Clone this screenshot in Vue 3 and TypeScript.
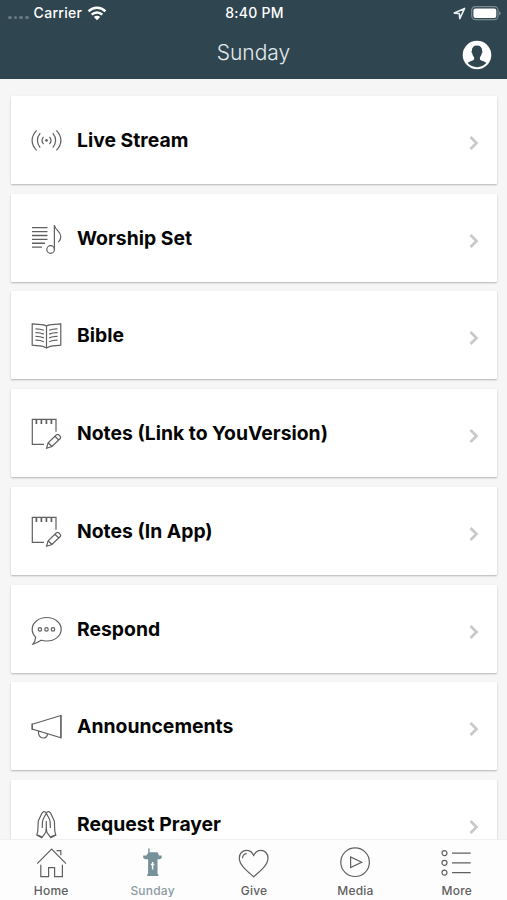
<script setup lang="ts">
type IconName = 'live' | 'worship' | 'bible' | 'notes' | 'respond' | 'announce' | 'prayer'
type TabName = 'home' | 'sunday' | 'give' | 'media' | 'more'

const items: { label: string; icon: IconName }[] = [
  { label: 'Live Stream', icon: 'live' },
  { label: 'Worship Set', icon: 'worship' },
  { label: 'Bible', icon: 'bible' },
  { label: 'Notes (Link to YouVersion)', icon: 'notes' },
  { label: 'Notes (In App)', icon: 'notes' },
  { label: 'Respond', icon: 'respond' },
  { label: 'Announcements', icon: 'announce' },
  { label: 'Request Prayer', icon: 'prayer' },
]

const tabs: { label: string; icon: TabName }[] = [
  { label: 'Home', icon: 'home' },
  { label: 'Sunday', icon: 'sunday' },
  { label: 'Give', icon: 'give' },
  { label: 'Media', icon: 'media' },
  { label: 'More', icon: 'more' },
]
const active: TabName = 'sunday'
</script>

<template>
  <div class="screen">
    <header class="header">
      <div class="status">
        <div class="carrier">
          <span class="dots"><i v-for="n in 4" :key="n" /></span>
          <span class="carrier-name">Carrier</span>
          <svg class="wifi" viewBox="0 0 20 15">
            <path d="M1.6 5.3a12 12 0 0 1 16.8 0M4.7 8.6a7.6 7.6 0 0 1 10.6 0" fill="none" stroke="#fff" stroke-width="2.5" />
            <path d="M10 14.3 6.8 11a4.6 4.6 0 0 1 6.4 0z" fill="#fff" />
          </svg>
        </div>
        <span class="time">8:40 PM</span>
        <div class="power">
          <svg class="location" viewBox="0 0 13 13">
            <path d="M11.6 1.4 1.3 6.1l5 .4.5 5.2z" fill="none" stroke="#e9eef0" stroke-width="1.6" stroke-linejoin="round" />
          </svg>
          <svg class="battery" viewBox="0 0 30 15">
            <rect x=".7" y=".7" width="26.3" height="13" rx="3.6" fill="none" stroke="#7b8b92" stroke-width="1.2" />
            <rect x="2.4" y="2.4" width="22.9" height="9.6" rx="2" fill="#fff" />
            <path d="M28.2 5v4.5q1.3-.8 1.3-2.25T28.2 5" fill="#8b999f" />
          </svg>
        </div>
      </div>
      <div class="titlebar">
        <h1>Sunday</h1>
        <svg class="profile" viewBox="0 0 30 30">
          <circle cx="15" cy="15" r="14.3" fill="#fff" />
          <path d="M15 5.5c-3.5 0-5.2 2.2-5.1 5.3-.6.5-.4 2.2.4 2.7.3 1.7 1 2.9 1.8 3.7v2.1c-.4 1.5-4.5 1.8-6.4 3.8a12.6 12.6 0 0 0 18.6 0c-1.9-2-6-2.3-6.4-3.8v-2.1c.8-.8 1.5-2 1.8-3.7.8-.5 1-2.2.4-2.7.1-3.1-1.6-5.3-5.1-5.3z" fill="#2f454f" />
        </svg>
      </div>
    </header>

    <main class="list">
      <article v-for="item in items" :key="item.label" class="card">
        <svg class="icon" viewBox="0 0 32 32">
          <template v-if="item.icon === 'live'">
            <circle cx="15.5" cy="16.4" r="1.3" class="solid" />
            <path d="M12.5 12.8q-3 3.6 0 7.2M18.5 12.8q3 3.6 0 7.2M9.2 9.2q-5.6 7.2 0 14.4M21.8 9.2q5.6 7.2 0 14.4M5.6 6.4q-9 10 0 20M25.4 6.4q9 10 0 20" />
          </template>
          <template v-else-if="item.icon === 'worship'">
            <path d="M1 5.6h15.5M1 9.6h15.5M1 13.5h15.5M1 17.4h15.5M1 21.2h13M1 25.1h10" stroke-width="1.4" />
            <path d="M23.4 27.4V3c.6 5.3 6.4 6.2 6.4 11.4 0 2.4-1 4.3-2.4 5.8" />
            <circle cx="19.6" cy="27.5" r="3.8" />
          </template>
          <template v-else-if="item.icon === 'bible'">
            <path d="M15.5 7C12 4.6 7.3 5.9 1.2 4.9v21.3c5.8.7 11-.1 14.3 2.9 3.3-3 8.5-2.2 14.3-2.9V4.9C23.7 5.9 19 4.6 15.5 7zM15.5 7v22" />
            <path d="M4.5 9.8q4.8-.1 8.3 1.5M4.5 13.6q4.8-.1 8.3 1.5M4.5 17.4q4.8-.1 8.3 1.5M4.5 21.2q4.8-.1 8.3 1.5M26.5 9.8q-4.8-.1-8.3 1.5M26.5 13.6q-4.8-.1-8.3 1.5M26.5 17.4q-4.8-.1-8.3 1.5M26.5 21.2q-4.8-.1-8.3 1.5" />
          </template>
          <template v-else-if="item.icon === 'notes'">
            <path d="M25 14.8V2.3H1.3v25.1H13" />
            <path d="M5.4 3v4M10.4 3v4M15.4 3v4M20.4 3v4" stroke-width="1.7" />
            <path d="M15.6 31.2l1.5-5.5 8.4-7.9q1.1-.9 2.2 0l1.5 1.5q.9 1.1 0 2.2l-8.2 8zM17.1 25.7l3.9 3.8M23.9 19.3l3.9 3.7" />
          </template>
          <template v-else-if="item.icon === 'respond'">
            <path d="M2 31.2q2.4-3 2.6-7.1C2.3 22 1.2 19.5 1.2 16.3 1.2 9.7 7.6 4.5 15.7 4.5s14.5 5.2 14.5 11.8S23.8 28 15.7 28q-3 0-5.5-.8-3.8 2.2-8.2 4z" />
            <circle cx="8.9" cy="16.4" r="1.7" /><circle cx="15.5" cy="16.4" r="1.7" /><circle cx="22" cy="16.4" r="1.7" />
          </template>
          <template v-else-if="item.icon === 'announce'">
            <path d="M1.2 14.2 29.9 5.5v22.3L1.2 19.1zM7.5 21c-.5 4.3 1.7 7 4.7 7 2.4 0 4-1.5 4.4-4.2" />
            <path d="M1.2 13.5v6.3M29.9 5v23.3" />
          </template>
          <template v-else>
            <path d="M15.3 5.2c-1.4-2.5-3.5-1.7-4.5.3L7.400 12.700c-1 3.500.7 8-1.600 14.600l5 2.500 3.300-4.600c1.400-1.500 1.200-4.200 1.200-11.400 0 7.200-.2 9.900 1.200 11.400l3.300 4.600 5-2.500c-2.300-6.600-.6-11.100-1.600-14.600L19.800 5.500c-1-2-3.100-2.800-4.500-.3M15.300 5.200 12 11.500c-1 2.500-.7 5.300-.7 8.500M15.300 5.200l3.300 6.300c1 2.500.7 5.300.7 8.500M5.600 26.500l5.800 2.600M25 26.500l-5.800 2.600M15.300 13v10.500" />
          </template>
        </svg>
        <span class="label">{{ item.label }}</span>
        <svg class="chevron" viewBox="0 0 12 18">
          <path d="m2.5 3 6 6-6 6" fill="none" stroke="#c9c9cb" stroke-width="2.7" />
        </svg>
      </article>
    </main>

    <nav class="tabs">
      <div v-for="tab in tabs" :key="tab.icon" class="tab" :class="{ active: tab.icon === active }">
        <svg class="icon" viewBox="0 0 32 32">
          <template v-if="tab.icon === 'home'">
            <path d="M2.2 16.6 16.6 2.2 31 16.6M5.8 17.7v11.900h7.800v-8.900h6v8.900h7.800V17.700M21.500 3.700h4.300v4.500" />
          </template>
          <template v-else-if="tab.icon === 'sunday'">
            <path class="fill" fill-rule="evenodd" d="M12.200 1.500h1.400v3.700h8l1.300 3.200h2.800v2.500l-1.700 1.300h-2.500v14.800h.8v1.900H11.300V27h.8V12.200H9.200L7.200 10.900V8.400h3.200l1.800-2.700zM15.900 15v1.800h-1v1.500h1v4.200h1.400v-4.200h1v-1.500h-1V15z" />
          </template>
          <template v-else-if="tab.icon === 'give'">
            <path d="M16.7 8.400C15 4.800 12.600 3.300 9.600 3.300 5.400 3.300 2.300 6.700 2.300 10.900c0 7.600 8.700 13.700 14.400 18.800C22.400 24.600 31 18.500 31 10.900c0-4.200-3.100-7.600-7.300-7.600-3 0-5.300 1.500-7 5.100zM5.500 11.200c0-2.700 1.800-4.600 4.200-4.600" />
          </template>
          <template v-else-if="tab.icon === 'media'">
            <circle cx="16.1" cy="15.2" r="14.3" />
            <path d="M11.6 9.9v10.7l11.1-5.3z" />
          </template>
          <template v-else>
            <circle cx="4.5" cy="6.1" r="2.5" /><circle cx="4.5" cy="15.8" r="2.5" /><circle cx="4.5" cy="25.6" r="2.5" />
            <path d="M12 6.1h18.700M12 15.800h18.700M12 25.600h18.700" />
          </template>
        </svg>
        <span>{{ tab.label }}</span>
      </div>
    </nav>
  </div>
</template>

<style>
body {
  background: #f6f6f6;
}
</style>

<style scoped>
.screen {
  display: flex;
  flex-direction: column;
  height: 900px;
  overflow: hidden;
  background: #f6f6f6;
  font-family: Inter, "Liberation Sans", sans-serif;
}
.header {
  flex: none;
  box-sizing: border-box;
  height: 79px;
  background: #2f454f;
  border-bottom: 1px solid #29434c;
  color: #fff;
}
.status {
  display: grid;
  grid-template-columns: 1fr auto 1fr;
  align-items: center;
  height: 26px;
  padding: 0 6px 0 8px;
  font-size: 14px;
  font-weight: 500;
  line-height: 18px;
}
.time {
  letter-spacing: 0.25px;
}
.carrier,
.power {
  display: flex;
  align-items: center;
}
.power {
  justify-content: flex-end;
  gap: 5px;
}
.dots {
  display: flex;
  gap: 2.2px;
  padding-top: 9px;
  margin-right: 5px;
}
.dots i {
  width: 3.5px;
  height: 3.5px;
  border-radius: 50%;
  background: #667981;
}
.carrier-name {
  width: 49px;
  letter-spacing: 0.3px;
}
.wifi {
  width: 20px;
  height: 15px;
  margin-left: 4.5px;
}
.location {
  width: 13px;
  height: 13px;
}
.battery {
  width: 30px;
  height: 15px;
}
.titlebar {
  display: grid;
  grid-template-columns: 1fr auto 1fr;
  align-items: center;
  height: 54px;
  padding: 0 15px;
}
h1 {
  grid-column: 2;
  margin: 0;
  color: #e3eaed;
  font-size: 21px;
  font-weight: 300;
  line-height: 26px;
}
.profile {
  justify-self: end;
  width: 30px;
  height: 30px;
  margin-top: 3px;
}
.list {
  flex: 1;
  min-height: 0;
  display: flex;
  flex-direction: column;
  gap: 9.72px;
  overflow: hidden;
  padding: 17px 10px 0 11px;
}
.card {
  flex: none;
  box-sizing: border-box;
  display: flex;
  align-items: center;
  height: 88px;
  padding: 0 17px 0 20px;
  border-radius: 1px;
  background: #fff;
  box-shadow: 0 1px 2px rgba(0, 0, 0, 0.27);
}
.icon {
  width: 32px;
  height: 32px;
  fill: none;
  stroke: #606060;
  stroke-width: 1.2;
}
.solid {
  fill: #606060;
  stroke: none;
}
.label {
  flex: 1;
  padding-left: 14px;
  color: #050505;
  font-size: 19.35px;
  font-weight: 650;
  line-height: 24px;
  white-space: nowrap;
}
.chevron {
  width: 12px;
  height: 18px;
  margin-top: 6px;
}
.tabs {
  flex: none;
  box-sizing: border-box;
  display: grid;
  grid-template-columns: repeat(5, 1fr);
  height: 61px;
  border-top: 1px solid #f0f0f0;
  background: #fdfdfd;
}
.tab {
  display: flex;
  flex-direction: column;
  align-items: center;
  padding-top: 7px;
  color: #606060;
  font-size: 12px;
  font-weight: 450;
  letter-spacing: 0.2px;
  line-height: 16px;
}
.tab span {
  padding-left: 1px;
  margin-top: 4px;
}
.tab.active {
  color: #8c9ba3;
}
.fill {
  fill: #78909a;
  stroke: none;
}
</style>
